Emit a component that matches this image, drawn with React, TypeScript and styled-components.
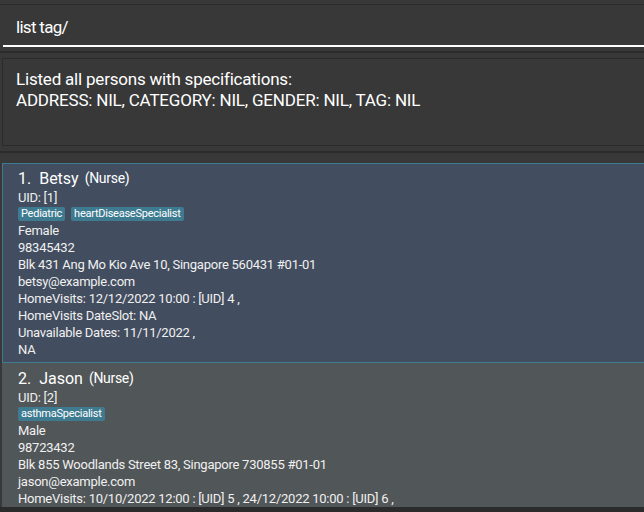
import React from "react";
import styled, { createGlobalStyle } from "styled-components";

const Global = createGlobalStyle`
  html, body { margin: 0; padding: 0; background: #383838; }
  body { width: 644px; height: 512px; overflow: hidden; font-family: "Segoe UI", Roboto, "Liberation Sans", sans-serif; }
`;

const Root = styled.div`
  width: 644px;
  height: 512px;
  display: flex;
  flex-direction: column;
  background: #383838;
  overflow: hidden;
`;

const CommandPane = styled.div`
  margin-top: 4px;
  border-top: 1px solid #2b2b2b;
  padding: 0 0 0 3px;
  height: 42px;
  display: flex;
  flex-direction: column;
  flex-shrink: 0;
`;

const CommandField = styled.div`
  flex: 1;
  display: flex;
  align-items: center;
  padding-left: 13px;
  padding-top: 3px;
  border-bottom: 2px solid #ffffff;
  color: #ffffff;
  font-size: 17px;
  letter-spacing: -0.7px;
`;

const Separator = styled.div`
  height: 2px;
  background: #2b2b2b;
  margin-top: 4px;
  flex-shrink: 0;
`;

const ResultPane = styled.div`
  margin: 5px 0 0 2px;
  height: 88px;
  flex-shrink: 0;
  border: 1px solid #2b2b2b;
  border-right: none;
  padding: 10px 13px;
  box-sizing: border-box;
  color: #ffffff;
  font-size: 17px;
  line-height: 21px;
  letter-spacing: -0.2px;
`;

const ListPane = styled.div`
  margin-top: 5px;
  border-top: 2px solid #2b2b2b;
  padding-top: 10px;
  flex: 1;
  min-height: 0;
  display: flex;
  flex-direction: column;
  overflow: hidden;
`;

const ListArea = styled.div`
  flex: 1;
  min-height: 0;
  overflow: hidden;
  display: flex;
  flex-direction: column;
`;

const Card = styled.div<{ $selected?: boolean }>`
  margin-left: 2px;
  background: ${(p) => (p.$selected ? "#424d5f" : "#515658")};
  border: 1px solid ${(p) => (p.$selected ? "#3e7b91" : "transparent")};
  border-right: none;
  padding: 5px 5px 4px 15px;
  color: #ffffff;
  display: flex;
  flex-direction: column;
  flex-shrink: 0;
`;

const NameRow = styled.div`
  display: flex;
  align-items: baseline;
  gap: 6px;
  height: 20px;
`;

const Name = styled.span`
  font-size: 16px;
`;

const Role = styled.span`
  font-size: 14px;
  position: relative;
  top: -1px;
  letter-spacing: -0.3px;
`;

const Line = styled.div`
  font-size: 13px;
  line-height: 17px;
  color: #f0f0f0;
  letter-spacing: -0.25px;
  white-space: nowrap;
`;

const Tags = styled.div`
  display: flex;
  gap: 6px;
  height: 16px;
  align-items: center;
`;

const Tag = styled.span`
  background: #3e7b91;
  color: #ffffff;
  font-size: 11px;
  line-height: 14px;
  padding: 0 3px;
  border-radius: 2px;
  letter-spacing: -0.25px;
`;

const Footer = styled.div`
  height: 5px;
  background: #2b2b2b;
  flex-shrink: 0;
`;

type Person = {
  idx: number;
  name: string;
  role: string;
  uid: number;
  tags: string[];
  lines: string[];
  selected?: boolean;
};

const people: Person[] = [
  {
    idx: 1,
    name: "Betsy",
    role: "(Nurse)",
    uid: 1,
    tags: ["Pediatric", "heartDiseaseSpecialist"],
    selected: true,
    lines: [
      "Female",
      "98345432",
      "Blk 431 Ang Mo Kio Ave 10, Singapore 560431 #01-01",
      "betsy@example.com",
      "HomeVisits: 12/12/2022 10:00 : [UID] 4 ,",
      "HomeVisits DateSlot: NA",
      "Unavailable Dates: 11/11/2022 ,",
      "NA",
    ],
  },
  {
    idx: 2,
    name: "Jason",
    role: "(Nurse)",
    uid: 2,
    tags: ["asthmaSpecialist"],
    lines: [
      "Male",
      "98723432",
      "Blk 855 Woodlands Street 83, Singapore 730855 #01-01",
      "jason@example.com",
      "HomeVisits: 10/10/2022 12:00 : [UID] 5 , 24/12/2022 10:00 : [UID] 6 ,",
    ],
  },
];

export default function App() {
  return (
    <Root>
      <Global />
      <CommandPane>
        <CommandField>list tag/</CommandField>
      </CommandPane>
      <Separator />
      <ResultPane>
        Listed all persons with specifications:
        <br />
        ADDRESS: NIL, CATEGORY: NIL, GENDER: NIL, TAG: NIL
      </ResultPane>
      <ListPane>
        <ListArea>
          {people.map((p) => (
            <Card key={p.idx} $selected={p.selected}>
              <NameRow>
                <Name>
                  {p.idx}.&nbsp;&nbsp;{p.name}
                </Name>
                <Role>{p.role}</Role>
              </NameRow>
              <Line>UID: [{p.uid}]</Line>
              <Tags>
                {p.tags.map((t) => (
                  <Tag key={t}>{t}</Tag>
                ))}
              </Tags>
              {p.lines.map((l, i) => (
                <Line key={i}>{l}</Line>
              ))}
            </Card>
          ))}
        </ListArea>
        <Footer />
      </ListPane>
    </Root>
  );
}
